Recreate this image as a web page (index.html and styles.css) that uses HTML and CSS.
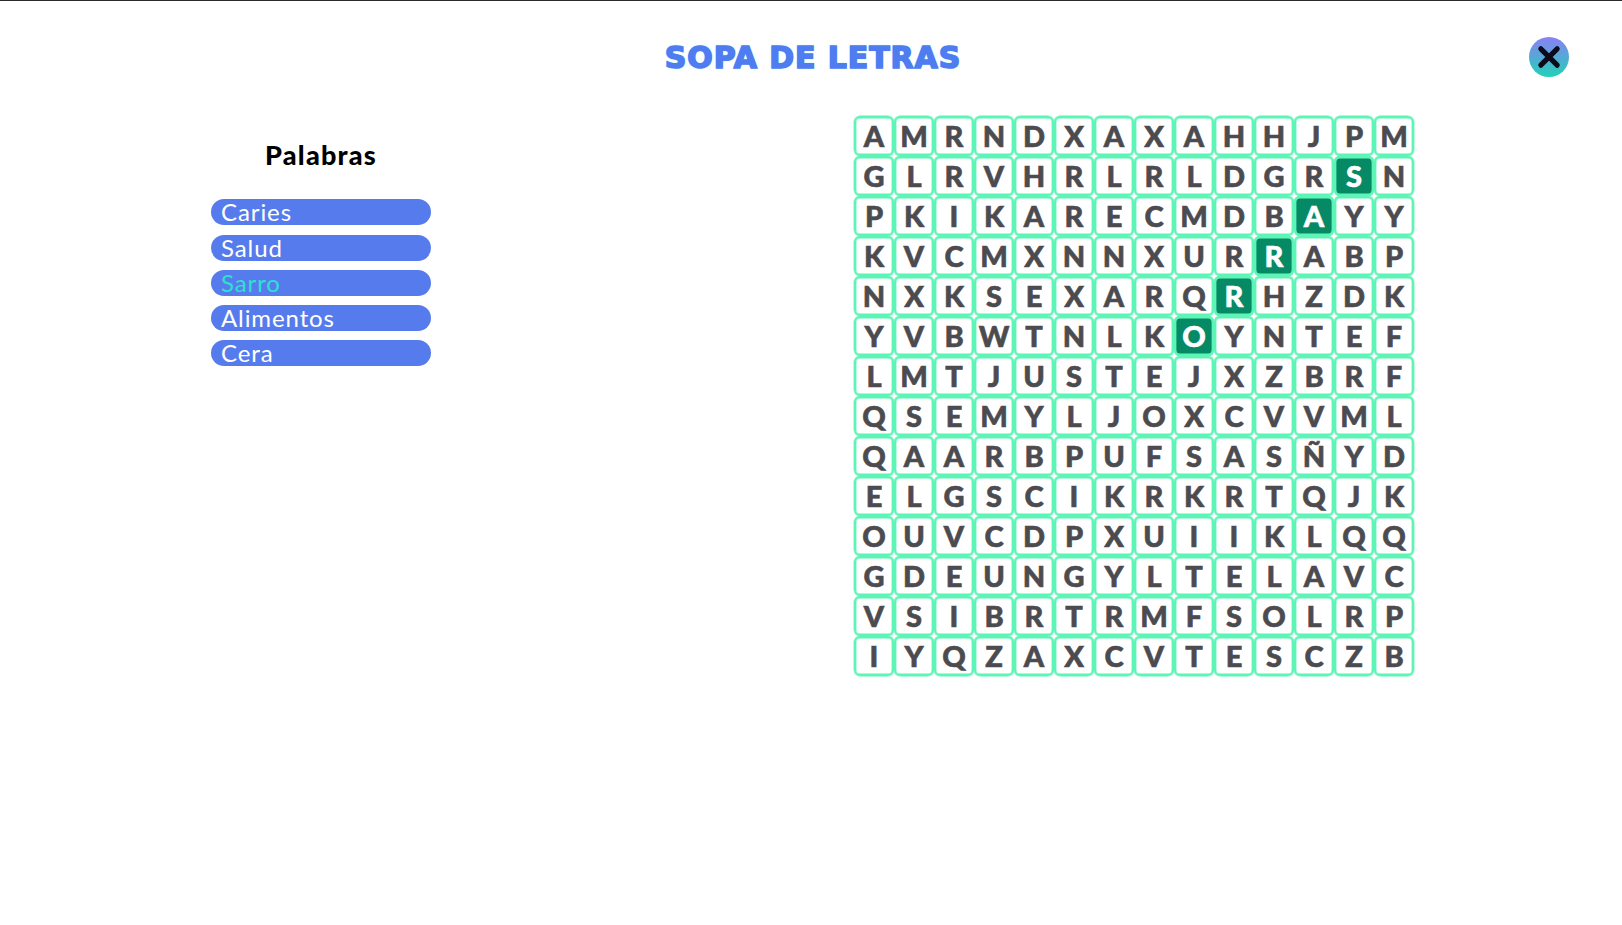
FILE: index.html
```html
<!DOCTYPE html>
<html lang="es">
<head>
  <meta charset="UTF-8" />
  <title>Sopa de letras</title>
  <link rel="stylesheet" href="styles.css">
</head>
<body>
  <!-- Cabecera -->
  <div class="header">
    <h1 class="title">SOPA DE LETRAS</h1>
    <button class="close" aria-label="Cerrar">
      <svg viewBox="0 0 24 24" width="28" height="28"><path d="M5 5L19 19M19 5L5 19" stroke="#0b0b1a" stroke-width="4.4" stroke-linecap="round" fill="none"/></svg>
    </button>
  </div>

  <div class="content">
    <!-- Lista de palabras -->
    <div class="words">
      <h2 class="words-title">Palabras</h2>
      <div class="word">Caries</div>
      <div class="word">Salud</div>
      <div class="word found">Sarro</div>
      <div class="word">Alimentos</div>
      <div class="word">Cera</div>
    </div>

    <!-- Tablero -->
    <div class="board">
      <div>A</div><div>M</div><div>R</div><div>N</div><div>D</div><div>X</div><div>A</div><div>X</div><div>A</div><div>H</div><div>H</div><div>J</div><div>P</div><div>M</div>
      <div>G</div><div>L</div><div>R</div><div>V</div><div>H</div><div>R</div><div>L</div><div>R</div><div>L</div><div>D</div><div>G</div><div>R</div><div class="on">S</div><div>N</div>
      <div>P</div><div>K</div><div>I</div><div>K</div><div>A</div><div>R</div><div>E</div><div>C</div><div>M</div><div>D</div><div>B</div><div class="on">A</div><div>Y</div><div>Y</div>
      <div>K</div><div>V</div><div>C</div><div>M</div><div>X</div><div>N</div><div>N</div><div>X</div><div>U</div><div>R</div><div class="on">R</div><div>A</div><div>B</div><div>P</div>
      <div>N</div><div>X</div><div>K</div><div>S</div><div>E</div><div>X</div><div>A</div><div>R</div><div>Q</div><div class="on">R</div><div>H</div><div>Z</div><div>D</div><div>K</div>
      <div>Y</div><div>V</div><div>B</div><div>W</div><div>T</div><div>N</div><div>L</div><div>K</div><div class="on">O</div><div>Y</div><div>N</div><div>T</div><div>E</div><div>F</div>
      <div>L</div><div>M</div><div>T</div><div>J</div><div>U</div><div>S</div><div>T</div><div>E</div><div>J</div><div>X</div><div>Z</div><div>B</div><div>R</div><div>F</div>
      <div>Q</div><div>S</div><div>E</div><div>M</div><div>Y</div><div>L</div><div>J</div><div>O</div><div>X</div><div>C</div><div>V</div><div>V</div><div>M</div><div>L</div>
      <div>Q</div><div>A</div><div>A</div><div>R</div><div>B</div><div>P</div><div>U</div><div>F</div><div>S</div><div>A</div><div>S</div><div>Ñ</div><div>Y</div><div>D</div>
      <div>E</div><div>L</div><div>G</div><div>S</div><div>C</div><div>I</div><div>K</div><div>R</div><div>K</div><div>R</div><div>T</div><div>Q</div><div>J</div><div>K</div>
      <div>O</div><div>U</div><div>V</div><div>C</div><div>D</div><div>P</div><div>X</div><div>U</div><div>I</div><div>I</div><div>K</div><div>L</div><div>Q</div><div>Q</div>
      <div>G</div><div>D</div><div>E</div><div>U</div><div>N</div><div>G</div><div>Y</div><div>L</div><div>T</div><div>E</div><div>L</div><div>A</div><div>V</div><div>C</div>
      <div>V</div><div>S</div><div>I</div><div>B</div><div>R</div><div>T</div><div>R</div><div>M</div><div>F</div><div>S</div><div>O</div><div>L</div><div>R</div><div>P</div>
      <div>I</div><div>Y</div><div>Q</div><div>Z</div><div>A</div><div>X</div><div>C</div><div>V</div><div>T</div><div>E</div><div>S</div><div>C</div><div>Z</div><div>B</div>
    </div>
  </div>
</body>
</html>
```

FILE: styles.css
```css
body {
  margin: 0;
  height: 925px;
  overflow: hidden;
  background: #fff;
  border-top: 1px solid #2a2a2a;
  box-sizing: border-box;
  font-family: "Lato", "Noto Sans", sans-serif;
}

.header {
  position: relative;
  display: flex;
  justify-content: center;
  align-items: center;
  height: 113px;
  padding-left: 4px;
  padding-bottom: 1px;
  box-sizing: border-box;
}

.title {
  margin: 0;
  font-family: "DejaVu Sans", sans-serif;
  font-size: 30px;
  font-weight: 700;
  letter-spacing: 0.9px;
  color: #4f7cf0;
  -webkit-text-stroke: 1.5px #4f7cf0;
  text-shadow: 0 0 2px #3fe0d0;
}

.close {
  position: absolute;
  top: 36px;
  right: 53px;
  width: 40px;
  height: 40px;
  padding: 0;
  border: none;
  border-radius: 50%;
  background: linear-gradient(180deg, #8a80f4 0%, #1fd2b8 100%);
  display: flex;
  justify-content: center;
  align-items: center;
}

.content {
  display: flex;
  justify-content: space-between;
  align-items: flex-start;
  padding: 2px 208px 0 211px;
}

.words {
  width: 220px;
  display: flex;
  flex-direction: column;
  gap: 9.3px;
}

.words-title {
  margin: 24px 0 20px;
  text-align: center;
  font-size: 27px;
  line-height: 30px;
  font-weight: 900;
  letter-spacing: 1.2px;
  color: #000;
}

.word {
  height: 26px;
  line-height: 25px;
  padding-left: 10px;
  border-radius: 13px;
  background: #567bed;
  color: #fff;
  font-size: 24px;
  letter-spacing: 0.9px;
}

.word.found {
  color: #2fe0d0;
}

.board {
  display: grid;
  grid-template-columns: repeat(14, 40px);
  grid-auto-rows: 40px;
}

.board div {
  box-sizing: border-box;
  border: 2px solid #5cf5b5;
  border-radius: 6px;
  box-shadow: inset 0 0 0 0.4px #5cf5b5, 0 0 0 0.4px #5cf5b5;
  background-clip: padding-box;
  display: flex;
  justify-content: center;
  align-items: center;
  padding-bottom: 1px;
  font-size: 29px;
  font-weight: 900;
  color: #4b4b50;
  -webkit-text-stroke: 0.6px #4b4b50;
}

.board div.on {
  background-color: #068a66;
  color: #fff;
  -webkit-text-stroke: 0.6px #fff;
}
```
